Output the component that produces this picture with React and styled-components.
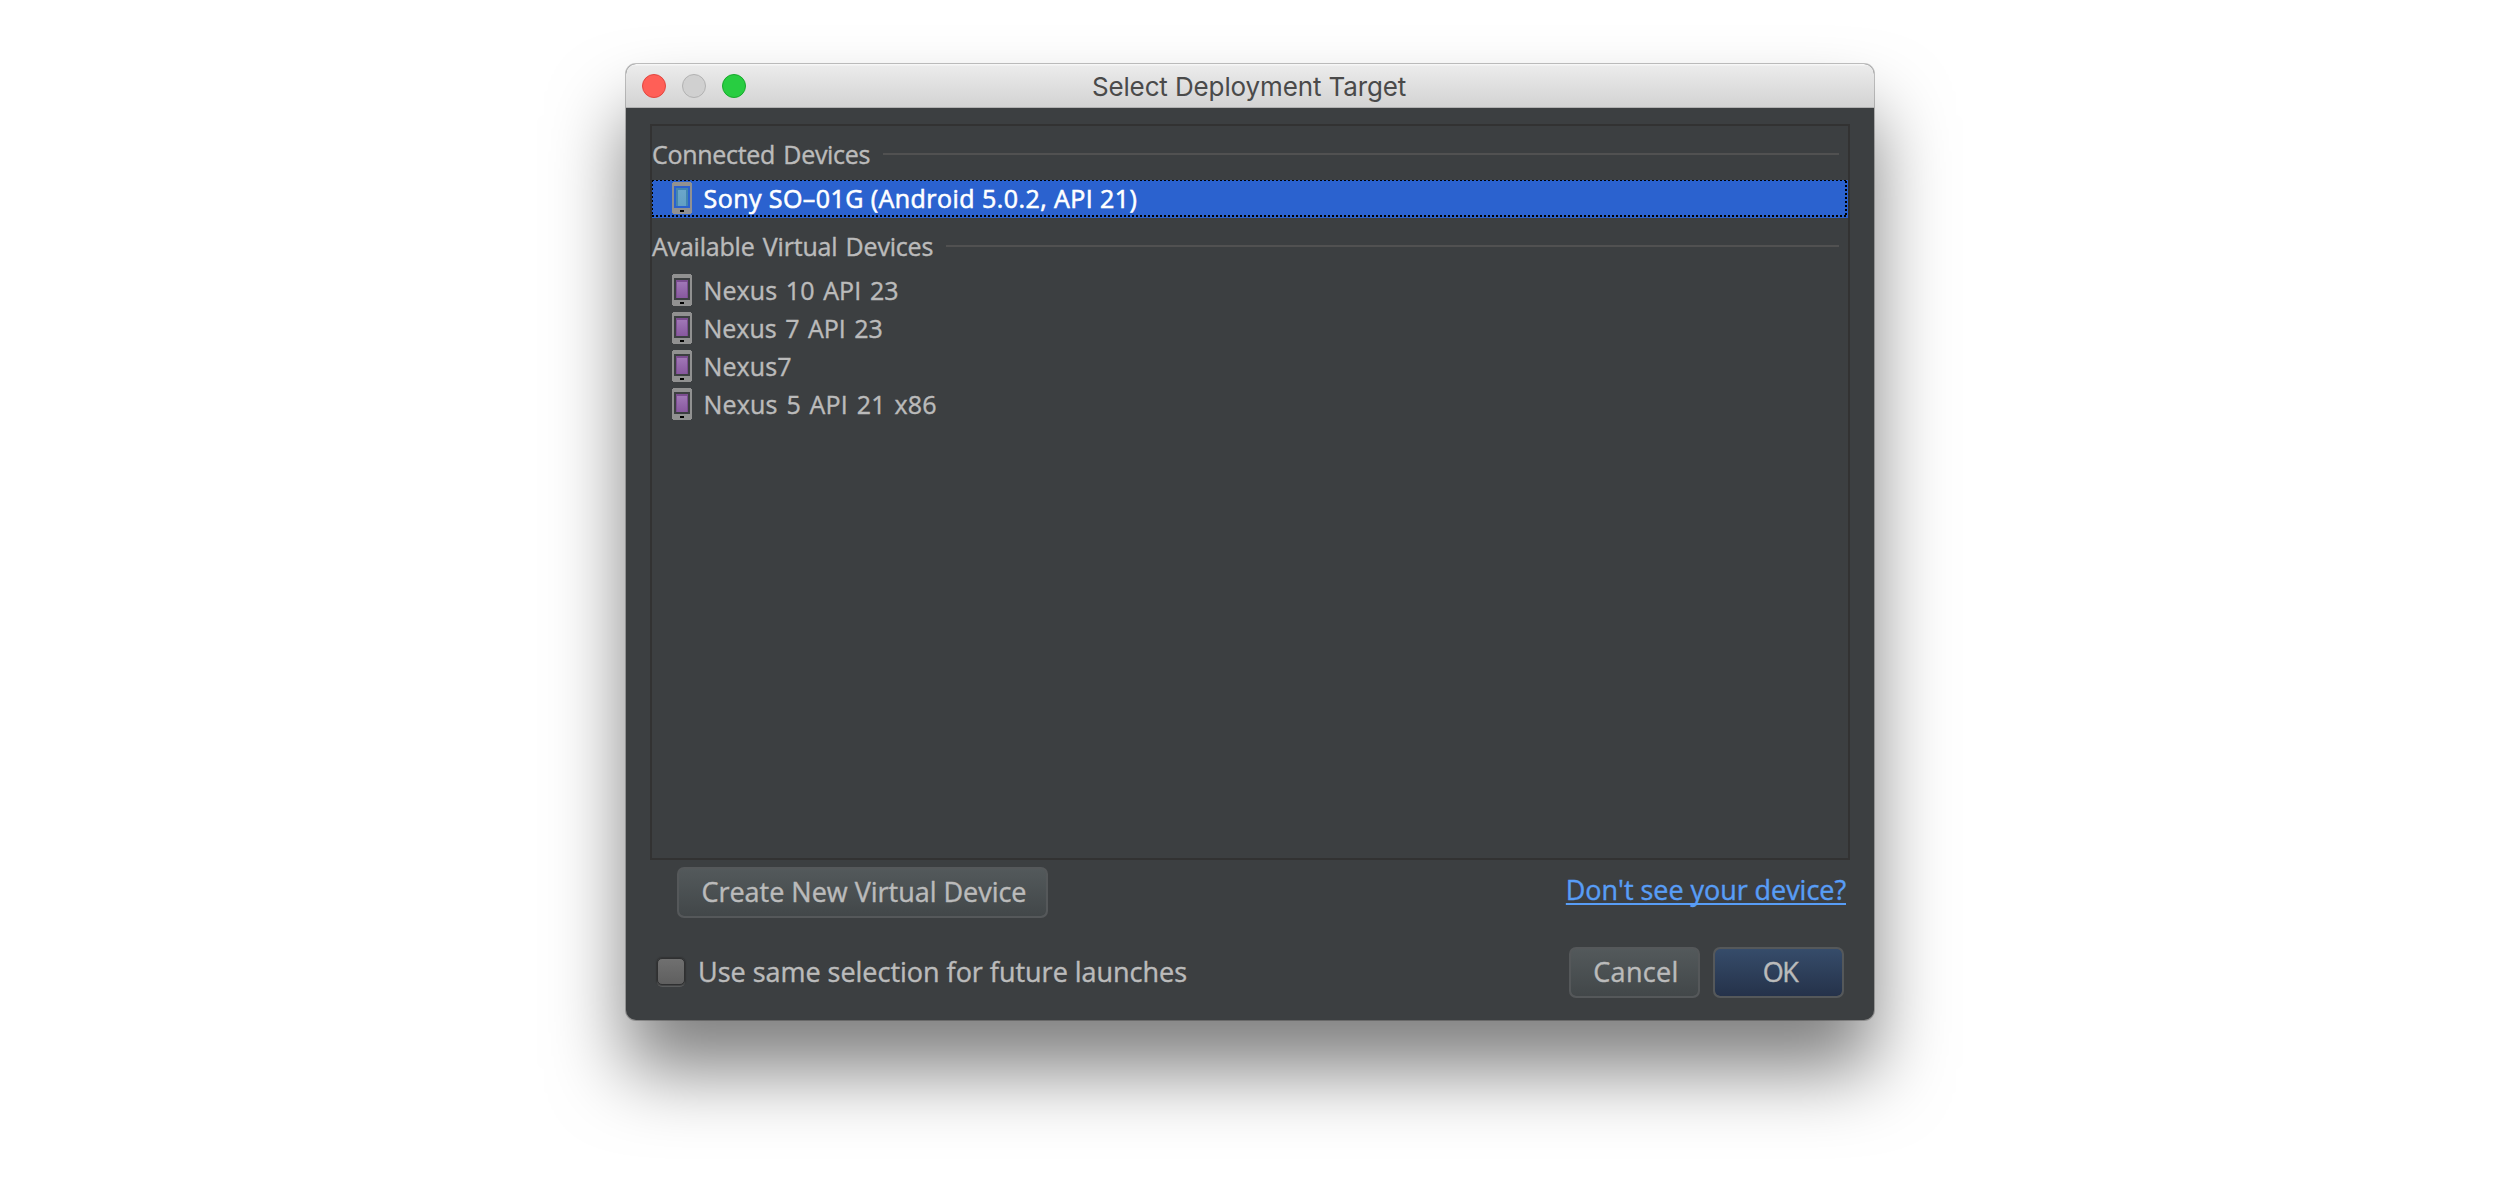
import React from 'react';
import styled, { createGlobalStyle, css } from 'styled-components';

const GlobalStyle = createGlobalStyle`
  body {
    margin: 0;
    background: #fff;
    overflow: hidden;
  }
  * { box-sizing: border-box; }
`;

const Stage = styled.main`
  height: 1180px;
  padding-top: 64px;
  display: flex;
  justify-content: center;
  align-items: flex-start;
  background: #fff;
  font-family: 'Open Sans', 'Noto Sans', sans-serif;
  color: #bbbbbb;
`;

const Dialog = styled.section`
  width: 1248px;
  height: 956px;
  display: flex;
  flex-direction: column;
  border-radius: 10px;
  background: #3c3f41;
  box-shadow: 0 0 0 1px rgba(0, 0, 0, 0.24), 0 50px 74px rgba(0, 0, 0, 0.5);
`;

const TitleBar = styled.header`
  height: 44px;
  flex: none;
  display: grid;
  grid-template-columns: 1fr auto 1fr;
  align-items: start;
  padding: 0 17px 0 16px;
  border-radius: 10px 10px 0 0;
  border-bottom: 1px solid #b1b1b1;
  background: linear-gradient(#f6f6f6 0, #f6f6f6 1px, #ebebeb 2px, #d3d3d3 100%);
`;

const Lights = styled.div`
  display: flex;
  gap: 16px;
  padding-top: 10px;
`;

const Light = styled.span`
  width: 24px;
  height: 24px;
  border-radius: 50%;
  background: ${(p) => p.$fill};
  border: 1px solid ${(p) => p.$edge};
`;

const Title = styled.h1`
  margin: 0 1px 0 0;
  font: 400 26px/45px Inter, Roboto, sans-serif;
  letter-spacing: -0.13px;
  color: #4a4a4a;
  white-space: nowrap;
`;

const Body = styled.div`
  flex: 1;
  display: flex;
  flex-direction: column;
  padding: 16px 24px 0;
`;

const DeviceList = styled.div`
  height: 736px;
  flex: none;
  border: 2px solid #323232;
`;

const GroupHeader = styled.div`
  height: 54px;
  display: flex;
  align-items: flex-start;
  gap: 13px;
  padding-right: 9px;
  font-size: 25px;
  line-height: 56px;
  letter-spacing: ${(p) => p.$track}px;
  word-spacing: 2px;
  white-space: nowrap;
  -webkit-text-stroke: 0.4px currentColor;
`;

const Rule = styled.span`
  flex: 1;
  height: 2px;
  margin-top: 27px;
  background: #515151;
`;

const selectedRow = css`
  color: #fff;
  word-spacing: 0;
  -webkit-text-stroke-width: 0.6px;
  background:
    repeating-linear-gradient(90deg, #000 0 2px, transparent 2px 4px) 0 0 / 100% 1px no-repeat,
    repeating-linear-gradient(90deg, #000 0 2px, transparent 2px 4px) 0 35px / 100% 2px no-repeat,
    repeating-linear-gradient(180deg, #000 0 2px, transparent 2px 4px) 0 0 / 1px 37px no-repeat,
    repeating-linear-gradient(180deg, transparent 0 1px, #000 1px 3px, transparent 3px 4px) 1193px 0 / 2px 37px no-repeat,
    #2b62cf;
`;

const Row = styled.div`
  height: 38px;
  display: flex;
  align-items: flex-start;
  gap: 11.5px;
  padding: 2px 0 0 20px;
  font-size: 25px;
  line-height: 33px;
  letter-spacing: ${(p) => p.$track}px;
  word-spacing: 2px;
  white-space: nowrap;
  -webkit-text-stroke: 0.4px currentColor;
  ${(p) => p.$selected && selectedRow}
`;

const Glyph = styled.svg`
  width: 20px;
  height: 32px;
  flex: none;
`;

const Actions = styled.div`
  height: 58px;
  display: flex;
  justify-content: space-between;
  align-items: flex-start;
  padding: 7px 4px 0 27px;
`;

const Footer = styled.div`
  display: flex;
  justify-content: space-between;
  align-items: flex-start;
  padding: 29px 6px 0 7px;
`;

const Button = styled.button`
  width: ${(p) => p.$width}px;
  height: 51px;
  padding: 0 0 1px 3px;
  border: 2px solid #55585a;
  border-radius: 7px;
  background: ${(p) =>
    p.$primary
      ? 'linear-gradient(#364c6a, #25324a) padding-box, #55585a'
      : 'linear-gradient(#53595b, #424749) padding-box, #55585a'};
  color: inherit;
  font: 400 27px/46px 'Open Sans', 'Noto Sans', sans-serif;
  letter-spacing: ${(p) => p.$track}px;
  white-space: nowrap;
  -webkit-text-stroke: 0.4px currentColor;
`;

const HelpLink = styled.a`
  font-size: 27px;
  line-height: 45px;
  letter-spacing: -0.05px;
  color: #589df6;
  text-decoration: underline;
  text-decoration-thickness: 2px;
  text-underline-offset: 3px;
  text-decoration-skip-ink: none;
  white-space: nowrap;
  -webkit-text-stroke: 0.4px currentColor;
`;

const CheckLabel = styled.label`
  display: flex;
  align-items: flex-start;
  gap: 13px;
  font-size: 27px;
  line-height: 49px;
  letter-spacing: -0.02px;
  white-space: nowrap;
  -webkit-text-stroke: 0.4px currentColor;
`;

const CheckBox = styled.span`
  width: 28px;
  height: 27px;
  margin-top: 11px;
  border: 1px solid #2f3031;
  border-radius: 5px;
  background: linear-gradient(#707070, #5f5f5f);
  box-shadow: 0 0 1px 1px rgba(40, 40, 40, 0.5), 0 2px 0 #5c5e5f;
`;

const ButtonPair = styled.div`
  display: flex;
  gap: 13px;
`;

const SCREENS = {
  physical: { edge: '#4285b0', top: '#6ba6ca', bottom: '#62a0c4' },
  virtual: { edge: '#7b4d90', top: '#a077b6', bottom: '#87589e' },
};

function DeviceGlyph({ kind }) {
  const c = SCREENS[kind];
  const id = `screen-${kind}`;
  return (
    <Glyph viewBox="0 0 20 32" shapeRendering="crispEdges" aria-hidden="true">
      <defs>
        <linearGradient id={id} x1="0" y1="0" x2="0" y2="1">
          <stop offset="0" stopColor={c.top} />
          <stop offset="1" stopColor={c.bottom} />
        </linearGradient>
      </defs>
      <path
        fill="#919191"
        fillRule="evenodd"
        d="M1 0H19V1H20V31H19V32H1V31H0V1H1ZM2 4V26H18V4Z"
      />
      <rect x="4" y="6" width="12" height="18" fill={c.edge} />
      <rect x={kind === 'physical' ? 6 : 5} y="8" width={kind === 'physical' ? 8 : 10} height="16" fill={`url(#${id})`} />
      <rect x="8" y="28" width="4" height="2" fill="#000" />
    </Glyph>
  );
}

const GROUPS = [
  {
    name: 'Connected Devices',
    track: -0.29,
    kind: 'physical',
    devices: [{ name: 'Sony SO–01G (Android 5.0.2, API 21)', track: 0.44, selected: true }],
  },
  {
    name: 'Available Virtual Devices',
    track: -0.2,
    kind: 'virtual',
    devices: [
      { name: 'Nexus 10 API 23', track: 0.1 },
      { name: 'Nexus 7 API 23', track: 0 },
      { name: 'Nexus7', track: 0.1 },
      { name: 'Nexus 5 API 21 x86', track: 0.2 },
    ],
  },
];

export default function App() {
  return (
    <Stage>
      <GlobalStyle />
      <Dialog>
        <TitleBar>
          <Lights>
            <Light $fill="#ff5f57" $edge="#e2463f" />
            <Light $fill="#d0d0d0" $edge="#b2b2b2" />
            <Light $fill="#28cd41" $edge="#17a92b" />
          </Lights>
          <Title>Select Deployment Target</Title>
        </TitleBar>
        <Body>
          <DeviceList>
            {GROUPS.map((group) => (
              <React.Fragment key={group.name}>
                <GroupHeader $track={group.track}>
                  {group.name}
                  <Rule />
                </GroupHeader>
                {group.devices.map((device) => (
                  <Row key={device.name} $selected={device.selected} $track={device.track}>
                    <DeviceGlyph kind={group.kind} />
                    {device.name}
                  </Row>
                ))}
              </React.Fragment>
            ))}
          </DeviceList>
          <Actions>
            <Button $width={371} $track={-0.02}>Create New Virtual Device</Button>
            <HelpLink>Don't see your device?</HelpLink>
          </Actions>
          <Footer>
            <CheckLabel>
              <CheckBox />
              Use same selection for future launches
            </CheckLabel>
            <ButtonPair>
              <Button $width={131} $track={0.35}>Cancel</Button>
              <Button $width={131} $track={-1.5} $primary>OK</Button>
            </ButtonPair>
          </Footer>
        </Body>
      </Dialog>
    </Stage>
  );
}
